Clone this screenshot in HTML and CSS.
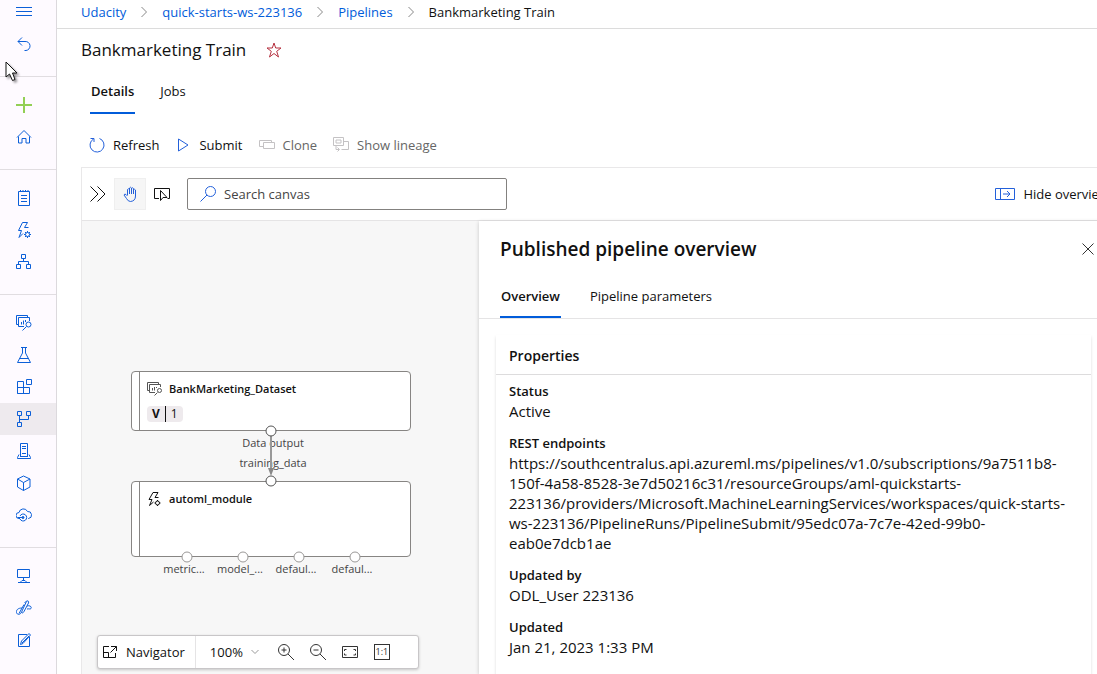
FILE: index.html
```html
<!DOCTYPE html>
<html lang="en">
<head>
<meta charset="utf-8">
<title>Bankmarketing Train</title>
<meta name="viewport" content="width=device-width, initial-scale=1">
<link rel="stylesheet" href="styles.css">
</head>
<body>
<div class="app">
  <nav class="sidebar" aria-label="Workspace">
    <div class="nav-group nav-group-top">
      <button class="nav-item nav-menu" aria-label="Menu"><svg class="icon" viewBox="0 0 16 16"><path d="M0 3.500h16M0 7.500h16M0 11.500h16"/></svg></button>
      <button class="nav-item" aria-label="Back"><svg class="icon" viewBox="0 0 16 16"><path d="M6 1.500 2 5.500l4 4M2 5.500h7a4.500 4.500 0 0 1 1 9H8.500"/></svg></button>
    </div>
    <div class="nav-group">
      <a class="nav-item nav-new" href="#" aria-label="New"><svg class="icon" viewBox="0 0 16 16"><path d="M8 0v16M0 8h16"/></svg></a>
      <a class="nav-item" href="#" aria-label="Home"><svg class="icon" viewBox="0 0 16 16"><path d="M1 8.500 8 1.500l7 7M2.500 7.500v6.500h3.500v-4.500h4v4.500h3.500V7.500"/></svg></a>
    </div>
    <div class="nav-group">
      <a class="nav-item" href="#" aria-label="Notebooks"><svg class="icon" viewBox="0 0 16 16"><path d="M2.500 1.500h11v14h-11zM4.500 0v2M7 0v2M9.500 0v2M12 0v2M5 5.500h6M5 8.500h6M5 11.500h6"/></svg></a>
      <a class="nav-item" href="#" aria-label="Automated ML"><svg class="icon" viewBox="0 0 16 16"><path d="M6.500.500h5l-3 5h4M6.500.500l-4 8h3L3 15.500l4-4"/><circle cx="11.500" cy="12.500" r="2"/><path d="M11.500 9v1.500M11.500 14.500V16M8 12.500h1.500M13.500 12.500H15M9 10l1 1M13 14l1 1M9 15l1-1M13 11l1-1"/></svg></a>
      <a class="nav-item" href="#" aria-label="Designer"><svg class="icon" viewBox="0 0 16 16"><path d="M5.500.500h4v4h-4zM.500 10.500h4v4h-4zM10.500 10.500h4v4h-4zM7.500 4.500v3M2.500 10.500v-3h10v3"/></svg></a>
    </div>
    <div class="nav-group">
      <a class="nav-item" href="#" aria-label="Data"><svg class="icon" viewBox="0 0 16 16"><path d="M2 9.500H.500v-9h11V2M8 11.500H2.500v-9h11V6M5.500 9.500V7M7.500 9.500V5.500M9.500 7V5"/><circle cx="12.500" cy="9.500" r="2.500"/><path d="m10.500 11.500-4 4"/></svg></a>
      <a class="nav-item" href="#" aria-label="Jobs"><svg class="icon" viewBox="0 0 16 16"><path d="M5 .500h6M6.500.500V6L1.500 15.500h13L9.500 6V.500M3.500 11.500h9"/></svg></a>
      <a class="nav-item" href="#" aria-label="Components"><svg class="icon" viewBox="0 0 16 16"><path d="M1.500 2.500h6v12h-6zM1.500 8.500h12v6h-12M10.500.500h5v5h-5z"/></svg></a>
      <a class="nav-item nav-current" href="#" aria-label="Pipelines" aria-current="page"><svg class="icon" viewBox="0 0 16 16"><path d="M1.500.500h4v4h-4zM10.500.500h4v4h-4zM1.500 11.500h4v4h-4zM3.500 4.500v7M3.500 8.500h9v-4"/></svg></a>
      <a class="nav-item" href="#" aria-label="Environments"><svg class="icon" viewBox="0 0 16 16"><path d="M4.500 13V.500h7V13M6 3.500h4M6 5.500h4M6 10.500h4M3 11.500 1.500 14.500v1h13v-1L13 11.500M4 13.500h8"/></svg></a>
      <a class="nav-item" href="#" aria-label="Models"><svg class="icon" viewBox="0 0 16 16"><path d="M7.500 1 14 4v8l-6.500 3.500L1.500 12V4zM1.500 4l6 3.500L14 4M7.500 7.500v8"/></svg></a>
      <a class="nav-item" href="#" aria-label="Endpoints"><svg class="icon" viewBox="0 0 16 16"><path d="M4 11.500H3a3 3 0 0 1 0-6 4.500 4.500 0 0 1 8.500-1 3.500 3.500 0 0 1 1 7H12M4 9a3.500 3.500 0 1 1 0 3"/><circle cx="7" cy="10.500" r="1" fill="currentColor"/><path d="M1.500 10.500h5"/></svg></a>
    </div>
    <div class="nav-group">
      <a class="nav-item" href="#" aria-label="Compute"><svg class="icon" viewBox="0 0 16 16"><path d="M1.500 1.500h12v8h-12zM7.500 9.500v3M2 14.500h2M11 14.500h3M4 14.500l2-2h3l2 2z"/></svg></a>
      <a class="nav-item" href="#" aria-label="Linked services"><svg class="icon" viewBox="0 0 16 16"><path d="m10 2.500-4 8.500c-1 2.500 1 2.500 2 .500l4.500-8.500c1-2-1.500-3-2.500-.500zM11 .500 8.500 3M6 8C2 8 0 10 .500 12.500s4 2.500 5-.500M11 6c3-1 5 1 4 2.500-1 1-2 0-4 .500M8 4.500l-5 9"/></svg></a>
      <a class="nav-item" href="#" aria-label="Data labeling"><svg class="icon" viewBox="0 0 16 16"><path d="M13.500 5v9.500h-11v-12H11M4.500 12.500l1-3.500 7.500-7.500 1.500 1.500L7 11.500zM6 11l7-7"/></svg></a>
    </div>
  </nav>

  <main class="main">
    <nav class="breadcrumb" aria-label="Breadcrumb">
      <a href="#">Udacity</a>
      <svg class="chevron" viewBox="0 0 8 12"><path d="m1.500 1 5 5-5 5"/></svg>
      <a href="#">quick-starts-ws-223136</a>
      <svg class="chevron" viewBox="0 0 8 12"><path d="m1.500 1 5 5-5 5"/></svg>
      <a href="#">Pipelines</a>
      <svg class="chevron" viewBox="0 0 8 12"><path d="m1.500 1 5 5-5 5"/></svg>
      <span>Bankmarketing Train</span>
    </nav>

    <div class="content">
      <header class="title-row">
        <h1>Bankmarketing Train</h1>
        <button class="star" aria-label="Favorite"><svg class="icon" viewBox="0 0 16 16"><path d="m8 1 1.700 5H15l-4.300 3.300L12.500 15 8 11.500 3.500 15l1.800-5.700L1 6h5.300z"/></svg></button>
      </header>

      <div class="tabs page-tabs" role="tablist">
        <button class="tab tab-active" role="tab" aria-selected="true">Details</button>
        <button class="tab" role="tab" aria-selected="false">Jobs</button>
      </div>

      <div class="commands">
        <button class="command"><svg class="icon accent" viewBox="0 0 16 16"><path d="M10.500 1.500a7 7 0 1 1-6 .500M1.500 1.500H5V5"/></svg>Refresh</button>
        <button class="command"><svg class="icon accent" viewBox="0 0 16 16"><path d="M3.500 2v12L13 8z"/></svg>Submit</button>
        <button class="command" disabled><svg class="icon" viewBox="0 0 16 16"><path d="M4 9.500H.500v-6h12v2M4.500 5.500h11v6h-11z"/></svg>Clone</button>
        <button class="command" disabled><svg class="icon" viewBox="0 0 16 16"><path d="M.500.500h10v8H.500zM3 3h5v3H3zM10.500 4.500h5v8H8.500M3 8.500v4h3M4.500 10.500l2 2-2 2"/></svg>Show lineage</button>
      </div>

      <section class="workbench">
        <div class="canvas-bar">
          <button class="tool" aria-label="Expand"><svg class="icon" viewBox="0 0 16 16"><path d="m.500.500 7.500 7.500-7.500 7.500M7.500.500 15 8l-7.500 7.500"/></svg></button>
          <button class="tool tool-on" aria-label="Pan" aria-pressed="true"><svg class="icon accent" viewBox="0 0 16 16"><path d="M5.500 9V3.500q1-1.500 2 0V8M7.500 8V2q1-1.500 2 0v6M9.500 8V2.500q1-1.500 2 0V8M11.500 8V4q1-1.500 2 0V10q0 5-5 5.500-2.500 0-4-3L2 9q.500-1.500 2-.500l1.500 1.500"/></svg></button>
          <button class="tool" aria-label="Select"><svg class="icon" viewBox="0 0 16 16"><path d="M5 12.500H.500v-10h15v10h-2M6.500 4.500v10l2.500-3h4z"/></svg></button>
          <label class="search">
            <svg class="icon accent" viewBox="0 0 16 16"><circle cx="10.500" cy="5.500" r="5"/><path d="M7 9 .500 15.500"/></svg>
            <input type="text" placeholder="Search canvas" aria-label="Search canvas">
          </label>
          <button class="command hide-overview"><svg class="icon icon-wide accent" viewBox="0 0 20 16"><path d="M.500 2.500h19v11H.500zM5.500 2.500v11M8 8h7M12 5l3 3-3 3"/></svg>Hide overview</button>
        </div>

        <div class="split">
          <div class="canvas">
            <article class="node node-data">
              <h2><svg class="icon node-icon" viewBox="0 0 16 16"><path d="M2 9.500H.500v-8h11V3M8 11.500H2.500v-8h11V6M5.500 9.500V7M7.500 9.500V6M9.500 7V6"/><circle cx="12.500" cy="9.500" r="2"/><path d="m10.500 11.500-3 3"/></svg>BankMarketing_Dataset</h2>
              <p class="version"><b>V</b><span>1</span></p>
            </article>
            <article class="node node-automl">
              <h2><svg class="icon" viewBox="0 0 16 16"><path d="M6 1.500h5l-3 5h3.500M6 1.500l-4 7h3L2.500 14.500l4-3.500"/><circle cx="10.500" cy="12" r="2"/><path d="M10.500 9v1M10.500 14v1M7.500 12h1M12.500 12h1"/></svg>automl_module</h2>
            </article>
            <span class="port-label label-output">Data output</span>
            <span class="port-label label-input">training_data</span>
            <svg class="wires" viewBox="0 0 398 360">
              <path class="wire" d="M190 214v36"/>
              <path class="arrow" d="M187 247h6l-3 8z"/>
              <circle class="port port-linked" cx="190" cy="210" r="5"/>
              <circle class="port port-linked" cx="190" cy="260" r="5"/>
              <circle class="port" cx="106" cy="336" r="5"/>
              <circle class="port" cx="162" cy="336" r="5"/>
              <circle class="port" cx="218" cy="336" r="5"/>
              <circle class="port" cx="274" cy="336" r="5"/>
            </svg>
            <div class="outputs">
              <span>metric...</span><span>model_...</span><span>defaul...</span><span>defaul...</span>
            </div>

            <div class="navigator">
              <button class="nav-button"><svg class="icon" viewBox="0 0 16 16"><path d="M7 2.500H1.500v11h12V9M1.500 8.500h5v5M9 2.500h5.500V7M14.500 2.500l-6 6"/></svg>Navigator</button>
              <button class="zoom-level">100%<svg class="caret" viewBox="0 0 8 6"><path d="m.500 1 3.500 3.500L7.500 1"/></svg></button>
              <button class="zoom-tool" aria-label="Zoom in"><svg class="icon" viewBox="0 0 16 16"><circle cx="6" cy="6" r="5.500"/><path d="m10 10 6 6M6 3.500v5M3.500 6h5"/></svg></button>
              <button class="zoom-tool" aria-label="Zoom out"><svg class="icon" viewBox="0 0 16 16"><circle cx="6" cy="6" r="5.500"/><path d="m10 10 6 6M3.500 6h5"/></svg></button>
              <button class="zoom-tool" aria-label="Fit to screen"><svg class="icon" viewBox="0 0 16 16"><path d="M.500 2.500h15v11H.500zM2.500 7V5.500h2M11.500 5.500h2V7M13.500 9.500V11h-2M4.500 11h-2V9.500"/></svg></button>
              <button class="zoom-tool" aria-label="Actual size"><span class="actual-size">1:1</span></button>
            </div>
          </div>

          <aside class="panel">
            <header class="panel-header">
              <h2>Published pipeline overview</h2>
              <button class="close" aria-label="Close"><svg class="icon" viewBox="0 0 16 16"><path d="m2.500 2.500 11 11M13.500 2.500l-11 11"/></svg></button>
            </header>
            <div class="tabs panel-tabs" role="tablist">
              <button class="tab tab-active" role="tab" aria-selected="true">Overview</button>
              <button class="tab" role="tab" aria-selected="false">Pipeline parameters</button>
            </div>
            <section class="card">
              <h3>Properties</h3>
              <dl>
                <dt>Status</dt>
                <dd>Active</dd>
                <dt>REST endpoints</dt>
                <dd>https://southcentralus.api.azureml.ms/pipelines/v1.0/subscriptions/9a7511b8-150f-4a58-8528-3e7d50216c31/resourceGroups/aml-quickstarts-223136/providers/Microsoft.MachineLearningServices/workspaces/quick-starts-ws-223136/PipelineRuns/PipelineSubmit/95edc07a-7c7e-42ed-99b0-eab0e7dcb1ae</dd>
                <dt>Updated by</dt>
                <dd>ODL_User 223136</dd>
                <dt>Updated</dt>
                <dd>Jan 21, 2023 1:33 PM</dd>
              </dl>
            </section>
          </aside>
        </div>
      </section>
    </div>
  </main>
  <svg class="pointer" viewBox="0 0 14 22"><path d="M1 1v15l3.500-3 3 6.500 2.500-1-2.500-6.500h4.500z"/></svg>
</div>
</body>
</html>
```
FILE: styles.css
```css
* { box-sizing: border-box; }

body {
  margin: 0;
  font: 13px/20px "Open Sans", "Noto Sans", sans-serif;
  color: #111;
  background: #fff;
}

h1, h2, h3, p, dl, dd { margin: 0; }
a { color: #015cda; text-decoration: none; }

button {
  font: inherit;
  color: inherit;
  background: none;
  border: 0;
  padding: 0;
  white-space: nowrap;
}

.icon, .chevron, .caret {
  width: 16px;
  height: 16px;
  flex: none;
  fill: none;
  stroke: currentColor;
  stroke-width: 1;
}
.icon-wide { width: 20px; }
.accent { color: #2360da; }

.app {
  display: flex;
  height: 100vh;
  overflow: hidden;
}

/* Sidebar */
.sidebar {
  flex: 0 0 57px;
  background: #fefaff;
  border-right: 1px solid #dcd9dd;
  overflow: hidden;
}
.nav-group {
  padding: 12px 0 16px;
  border-bottom: 1px solid #e1dde1;
}
.nav-group-top { padding-top: 0; }
.nav-group:last-child { border-bottom: 0; }
.nav-item {
  display: flex;
  align-items: center;
  width: 100%;
  height: 32px;
  padding-left: 16px;
  color: #0b5fd8;
}
.nav-menu { height: 28px; padding-bottom: 4px; }
.nav-new { color: #93cf55; }
.nav-new .icon { stroke-width: 2; }
.nav-current { background: #eeeaee; }

/* Header */
.main {
  flex: 1;
  min-width: 0;
  display: flex;
  flex-direction: column;
}
.breadcrumb {
  display: flex;
  align-items: center;
  gap: 14px;
  height: 29px;
  padding: 0 24px 4px;
  border-bottom: 1px solid #dcdcdc;
  white-space: nowrap;
}
.chevron { width: 8px; height: 12px; color: #888; }
.content {
  flex: 1;
  min-height: 0;
  display: flex;
  flex-direction: column;
  padding-left: 24px;
}
.title-row {
  display: flex;
  align-items: center;
  gap: 20px;
  height: 41px;
}
h1 { font-size: 17px; line-height: 24px; font-weight: 500; }
.star { display: flex; color: #b5303f; }

.tabs { display: flex; gap: 24px; }
.tab {
  padding: 0 1px;
  border-bottom: 2px solid transparent;
}
.tab-active { font-weight: 600; border-color: #015cda; }
.page-tabs { height: 44px; padding-left: 9px; }
.commands {
  display: flex;
  align-items: center;
  gap: 16px;
  height: 53px;
  padding: 8px 0 0 8px;
}
.command { display: flex; align-items: center; gap: 8px; }
.command:disabled { color: #666; }
.command:disabled .icon { color: #c4c2c4; }

/* Canvas toolbar */
.workbench {
  flex: 1;
  min-height: 0;
  display: flex;
  flex-direction: column;
  margin-right: -16px;
  border: 1px solid #e9e8e9;
  border-bottom: 0;
}
.canvas-bar {
  display: flex;
  align-items: center;
  height: 53px;
  border-bottom: 1px solid #e5e4e5;
}
.tool {
  display: flex;
  align-items: center;
  justify-content: center;
  width: 32px;
  height: 32px;
}
.tool-on { background: #f6f6f6; border: 1px solid #efefef; }
.search {
  display: flex;
  align-items: center;
  gap: 8px;
  width: 320px;
  height: 32px;
  margin-left: 9px;
  padding: 0 12px;
  border: 1px solid #83817f;
  border-radius: 2px;
}
.search input {
  flex: 1;
  min-width: 0;
  padding: 0;
  border: 0;
  outline: 0;
  font: inherit;
  background: none;
}
.search input::placeholder { color: #444; opacity: 1; }
.hide-overview { margin: 0 3px 0 auto; }

.split { flex: 1; min-height: 0; display: flex; }

/* Canvas */
.canvas {
  position: relative;
  flex: 0 0 397px;
  background: #f7f7f7;
}
.node {
  position: absolute;
  left: 49px;
  width: 280px;
  padding: 7px 0 0 15px;
  background: linear-gradient(90deg, transparent 7px, #878583 7px 8px, transparent 8px) #fff;
  border: 1px solid #878583;
  border-radius: 4px;
}
.node-data { top: 150px; height: 60px; }
.node-automl { top: 260px; height: 76px; }
.node-icon { color: #555; }
.node h2 {
  display: flex;
  align-items: center;
  gap: 6px;
  font-size: 11px;
  line-height: 20px;
  font-weight: 600;
}
.version {
  display: flex;
  width: max-content;
  height: 16px;
  margin-top: 7px;
  border-radius: 4px;
  background: #eeeaed;
  font-size: 12px;
  line-height: 16px;
}
.version b { padding: 0 5px; border-right: 1px solid #111; }
.version span { padding: 0 5px; }
.port-label {
  position: absolute;
  left: 0;
  width: 382px;
  text-align: center;
  font-size: 11px;
  line-height: 20px;
  color: #444;
}
.label-output { top: 212px; }
.label-input { top: 232px; }
.wires {
  position: absolute;
  top: 0;
  left: -1px;
  width: 398px;
  height: 360px;
}
.wire { fill: none; stroke: #999; stroke-width: 2; }
.arrow { fill: #888; }
.port { fill: #fff; stroke: #9a9897; stroke-width: 1; }
.port-linked { stroke: #555; }
.outputs {
  position: absolute;
  top: 338px;
  left: 74px;
  display: grid;
  grid-template-columns: repeat(4, 56px);
  text-align: center;
  font-size: 11px;
  line-height: 20px;
  color: #444;
}

.navigator {
  position: absolute;
  left: 15px;
  bottom: 5px;
  display: flex;
  align-items: center;
  width: 322px;
  height: 34px;
  background: #fff;
  border: 1px solid #c8c6c8;
  border-radius: 3px;
  box-shadow: 0 1px 3px #0003;
}
.nav-button {
  display: flex;
  align-items: center;
  gap: 8px;
  height: 32px;
  padding: 0 10px 0 4px;
  border-right: 1px solid #e5e4e5;
}
.zoom-level {
  display: flex;
  align-items: center;
  gap: 8px;
  padding: 0 11px 0 14px;
}
.caret { width: 8px; height: 6px; color: #999; }
.zoom-tool {
  display: flex;
  align-items: center;
  justify-content: center;
  width: 32px;
  height: 32px;
  color: #333;
}
.actual-size {
  width: 16px;
  height: 16px;
  border: 1px solid #333;
  font-size: 9px;
  line-height: 14px;
}

/* Overview panel */
.panel {
  flex: 1;
  min-width: 0;
  z-index: 1;
  background: #fff;
  box-shadow: 0 1px 4px #0003;
  overflow: hidden;
}
.panel-header {
  display: flex;
  align-items: center;
  justify-content: space-between;
  height: 55px;
  padding: 0 16px 0 21px;
}
.panel-header h2 { font-size: 19px; line-height: 28px; font-weight: 600; }
.close { display: flex; color: #333; }
.panel-tabs {
  height: 43px;
  padding-left: 21px;
  gap: 28px;
  border-bottom: 1px solid #e5e4e5;
}
.card {
  height: 400px;
  margin: 16px 21px 0 17px;
  box-shadow: 0 2px 3px #0002;
}
.card h3 {
  padding: 11px 13px 8px;
  border-bottom: 1px solid #dddcdd;
  font-size: 14px;
  line-height: 20px;
  font-weight: 600;
}
dl { padding: 6px 13px; }
dt { font-size: 13px; line-height: 20px; font-weight: 600; }
dd { font-size: 15px; line-height: 20px; margin-bottom: 12px; overflow-wrap: anywhere; }

.pointer {
  position: absolute;
  top: 61px;
  left: 5px;
  width: 14px;
  height: 22px;
  fill: #fff;
  stroke: #111;
  stroke-width: 1;
  filter: drop-shadow(2px 2px 1px #0006);
}
```
